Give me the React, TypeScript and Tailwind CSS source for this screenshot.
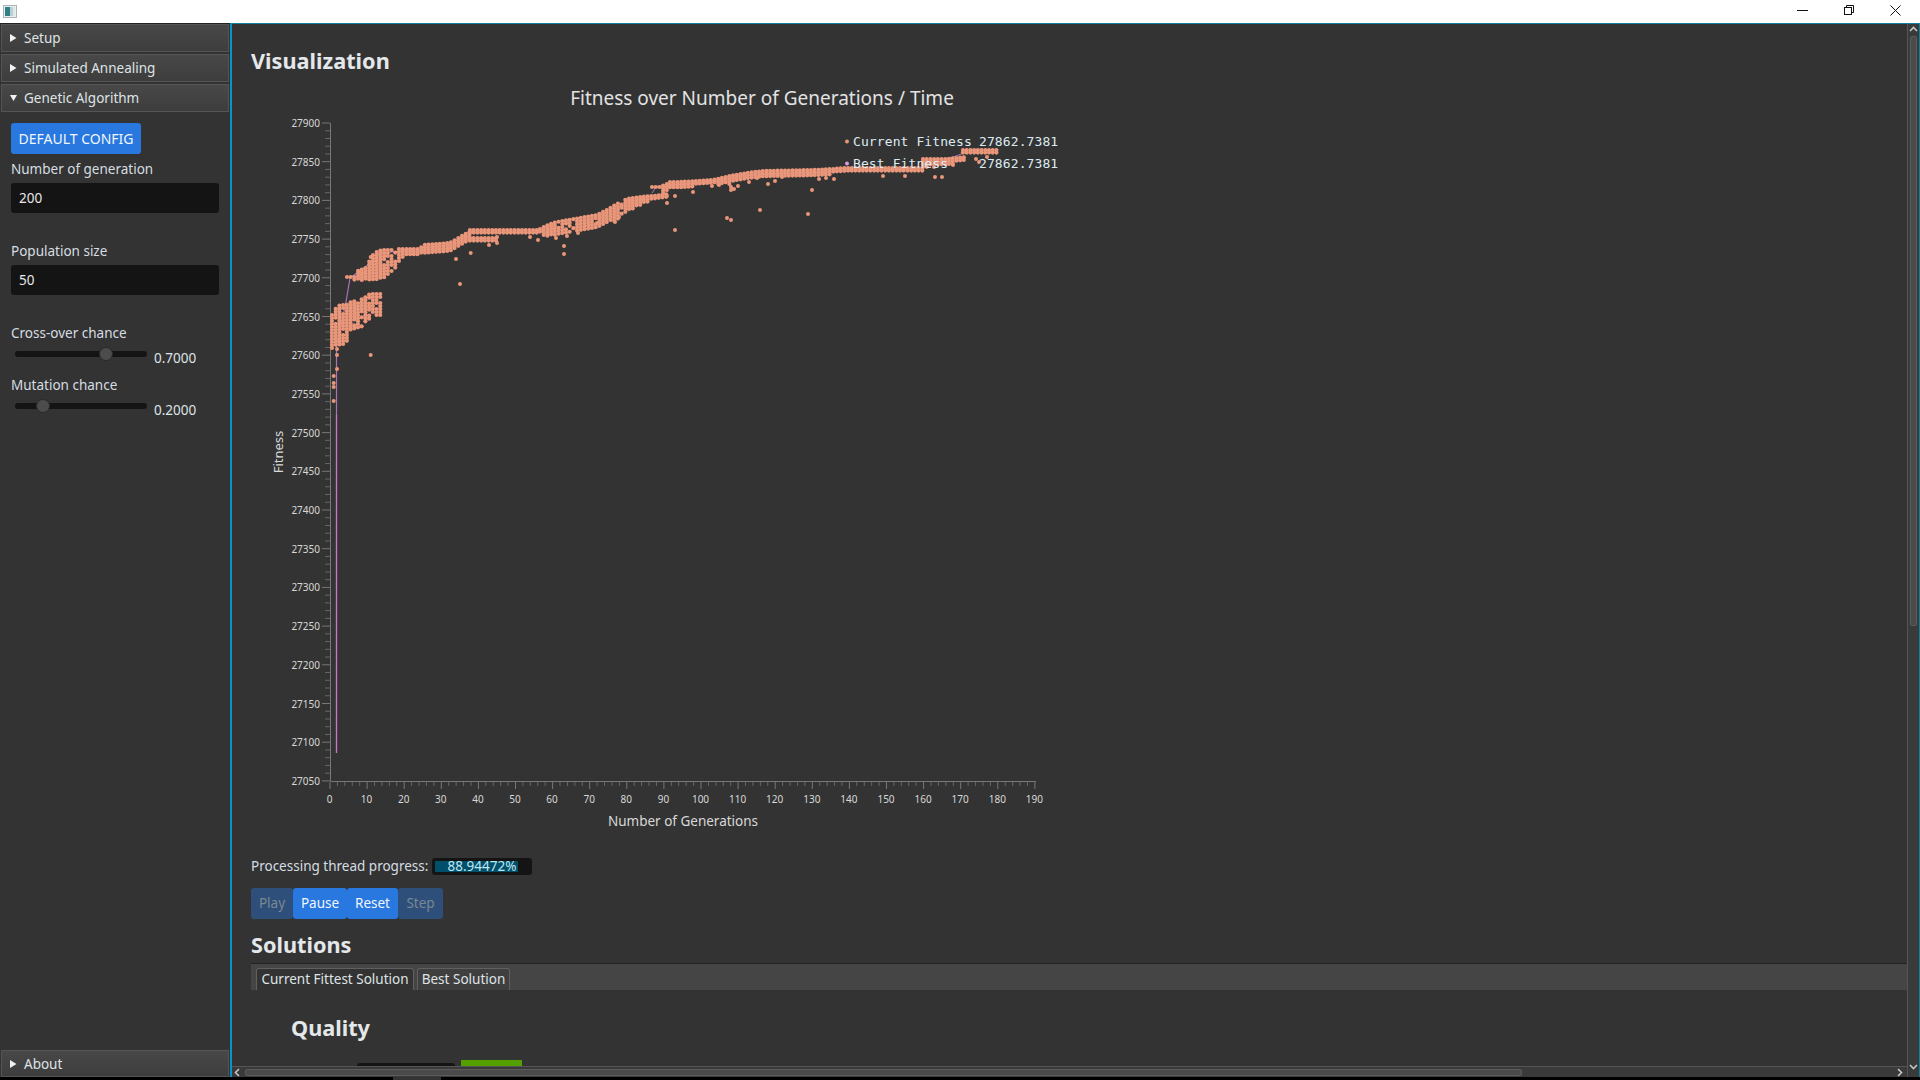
import { ReactNode } from 'react';

const DOT = '#e9967a';
const LINE = '#a874b4';

// envelope points: [x, top, bottom] in page pixels
type Env = [number, number, number][];

const bands: Env[] = [
  [[332, 312, 348], [340, 305, 346], [346.7, 305, 342], [348.3, 303, 330], [363, 299, 327], [370, 294, 318], [380, 294, 317], [383, 294, 310]],
  [[347, 277, 279], [355, 277, 280], [358, 271, 280], [366, 268, 280], [372, 256, 280], [378, 251, 280], [385, 250, 279], [393, 250, 272], [398, 249, 263], [403, 249, 257], [420, 249, 254], [423, 245, 253], [450, 243, 252], [460, 237, 246], [467, 233, 241], [470, 232, 240]],
  [[470, 230, 233], [540, 230, 233]],
  [[470, 238, 242], [497, 238, 242]],
  [[540, 229, 234], [548, 225, 236], [557, 222, 235], [580, 218, 232], [597, 215, 228], [607, 210, 224], [617, 204, 220], [627, 199, 211], [640, 197, 206], [653, 196, 200], [668, 194, 199]],
  [[652, 187, 189], [660, 187, 189], [667, 184, 199], [670, 183, 198]],
  [[670, 182, 189], [680, 182, 188], [713, 180, 184], [730, 176, 184], [747, 173, 179], [763, 171, 178], [813, 170, 176], [833, 169, 174], [847, 168, 172], [923, 168, 172]],
  [[923, 159, 168], [930, 159, 166], [947, 159, 165], [967, 157, 161]],
  [[963, 150, 153], [997, 150, 153]],
];

const outliers: [number, number][] = [
  [370.7, 355], [337, 349], [337, 355], [337, 369], [333.7, 376], [333.7, 383], [333.7, 387], [333.7, 401],
  [370.7, 257], [470.7, 253], [456, 259], [460, 284],
  [489, 245], [497, 243], [497, 237], [530, 237], [538, 240], [556, 238], [567, 236], [564, 246], [564, 254], [578, 233], [597, 223], [615, 222], [619, 217], [667, 203], [675, 196], [675, 230], [693, 192], [712, 186], [719, 185], [731, 187], [731, 190], [734, 189], [738, 186], [749, 182], [768, 184], [757, 178], [727, 218], [731, 220], [760, 210], [808, 214], [812, 190], [819, 179], [826, 178], [834, 179], [782, 177], [775, 181], [883, 176], [905, 176], [935, 177], [942, 177], [976, 159], [979, 162], [987, 157], [953, 165], [934, 167],
];

function makeDots() {
  const dots: [number, number][] = [];
  let seed = 7;
  const rnd = () => {
    seed = (seed * 16807) % 2147483647;
    return seed / 2147483647;
  };
  bands.forEach((env) => {
    const x0 = env[0][0];
    const x1 = env[env.length - 1][0];
    for (let x = x0; x <= x1; x += 3.71) {
      let i = 0;
      while (i < env.length - 2 && env[i + 1][0] < x) i++;
      const a = env[i];
      const b = env[i + 1];
      const t = b[0] === a[0] ? 0 : (x - a[0]) / (b[0] - a[0]);
      const top = a[1] + (b[1] - a[1]) * t;
      const bottom = a[2] + (b[2] - a[2]) * t;
      const tall = bottom - top > 12;
      for (let y = top; y <= bottom + 0.1; y += tall ? 3 : 2.6) {
        if (tall && rnd() < 0.1) continue;
        dots.push([x, y]);
      }
    }
  });
  return dots;
}

const dots = makeDots();
const yLabels = Array.from({ length: 18 }, (_, i) => 27900 - i * 50);
const xLabels = Array.from({ length: 20 }, (_, i) => i * 10);
const yAt = (i: number) => 123 + i * 38.7;
const xAt = (i: number) => 330 + i * 37.1;

function Chart() {
  return (
    <svg width={870} height={764} viewBox="232 80 870 764" className="mt-[3px] block shrink-0">
      <text x={762} y={105} textAnchor="middle" fontSize={19} fill="#e2e2e2" fontFamily="Noto Sans, sans-serif">
        Fitness over Number of Generations / Time
      </text>

      {/* axes */}
      <line x1={330.5} y1={123} x2={330.5} y2={781} stroke="#777" />
      <line x1={330.5} y1={781.5} x2={1036} y2={781.5} stroke="#777" />
      {yLabels.map((v, i) => (
        <g key={v}>
          <line x1={322} x2={330} y1={yAt(i)} y2={yAt(i)} stroke="#777" />
          {i < 17 &&
            [1, 2, 3, 4].map((m) => (
              <line key={m} x1={325} x2={330} y1={yAt(i) + m * 7.74} y2={yAt(i) + m * 7.74} stroke="#666" />
            ))}
          <text x={320} y={yAt(i) + 4} textAnchor="end" fontSize={10} fill="#d8d8d8" fontFamily="Noto Sans, sans-serif">
            {v}
          </text>
        </g>
      ))}
      {xLabels.map((v, i) => (
        <g key={v}>
          <line x1={xAt(i)} x2={xAt(i)} y1={782} y2={789} stroke="#777" />
          {i < 19 &&
            [1, 2, 3, 4].map((m) => (
              <line key={m} x1={xAt(i) + m * 7.42} x2={xAt(i) + m * 7.42} y1={782} y2={786} stroke="#666" />
            ))}
          <text x={xAt(i) - 0.5} y={803} textAnchor="middle" fontSize={10} fill="#d8d8d8" fontFamily="Noto Sans, sans-serif">
            {v}
          </text>
        </g>
      ))}
      <text x={683} y={826} textAnchor="middle" fontSize={13.5} fill="#d8d8d8" fontFamily="Noto Sans, sans-serif">
        Number of Generations
      </text>
      <text
        transform="translate(283 452) rotate(-90)"
        textAnchor="middle"
        fontSize={13}
        fill="#d8d8d8"
        fontFamily="Noto Sans, sans-serif"
      >
        Fitness
      </text>

      {/* best fitness line */}
      <polyline points="336.5,753 336.5,345 340,330 346,302 350,278 358,272 372,262 378,254 412,249" fill="none" stroke={LINE} strokeWidth={1.2} />
      <line x1={336.5} x2={336.5} y1={415} y2={753} stroke="#cf73cf" strokeWidth={1.2} />
      <polyline points="652,193 656,187 712,181 732,176 923,168 964,153 967,150" fill="none" stroke={LINE} strokeWidth={1} />

      {/* current fitness dots */}
      {dots.map(([x, y], i) => (
        <circle key={i} cx={x} cy={y} r={2.1} fill={DOT} />
      ))}
      {outliers.map(([x, y], i) => (
        <circle key={i} cx={x} cy={y} r={2} fill={DOT} />
      ))}

      {/* legend */}
      <circle cx={847} cy={141.5} r={2} fill={DOT} />
      <circle cx={847} cy={163.5} r={2} fill="#d99bdc" />
      <text x={853} y={146} fontSize={13} fill="#dcebf2" fontFamily="DejaVu Sans Mono, monospace" letterSpacing={0.1}>
        Current Fitness
      </text>
      <text x={979} y={146} fontSize={13} fill="#dcebf2" fontFamily="DejaVu Sans Mono, monospace" letterSpacing={0.1}>
        27862.7381
      </text>
      <text x={853} y={168} fontSize={13} fill="#dcebf2" fontFamily="DejaVu Sans Mono, monospace" letterSpacing={0.1}>
        Best Fitness
      </text>
      <text x={979} y={168} fontSize={13} fill="#dcebf2" fontFamily="DejaVu Sans Mono, monospace" letterSpacing={0.1}>
        27862.7381
      </text>
    </svg>
  );
}

function Arrow({ open }: { open?: boolean }) {
  return (
    <svg width={7} height={8} viewBox="0 0 7 8" className="shrink-0">
      <path d={open ? 'M0 1 L7 1 L3.5 7 Z' : 'M0 0 L6.5 4 L0 8 Z'} fill="#f2f2f2" />
    </svg>
  );
}

function PaneTitle({ label, open, last }: { label: string; open?: boolean; last?: boolean }) {
  return (
    <div
      className={`mx-px flex shrink-0 items-center gap-[7px] border border-[#555] bg-gradient-to-b from-[#484848] to-[#3d3d3d] pl-[8px] text-[13.5px] text-[#dfe3e6] ${
        last ? 'h-[27px] pt-px' : 'h-[28px]'
      }`}
    >
      <Arrow open={open} />
      <span>{label}</span>
    </div>
  );
}

function Field({ value }: { value: string }) {
  return (
    <div className="mx-[11px] flex h-[30px] items-center rounded-[3px] bg-[#141414] pl-[8px] text-[13.5px] text-[#e8e8e8]">
      {value}
    </div>
  );
}

function Slider({ thumb, value }: { thumb: number; value: string }) {
  return (
    <div className="flex h-[24px] items-start pl-[15px]">
      <div className="relative mt-[8px] h-[6px] w-[132px] rounded-full bg-[#141414]">
        <div
          className="absolute top-[-4px] h-[14px] w-[14px] rounded-full border border-[#2a2a2a] bg-[#4c4c4c]"
          style={{ left: thumb }}
        />
      </div>
      <span className="ml-[7px] mt-[5px] text-[13.5px] leading-[20px] text-[#dfe3e6]">{value}</span>
    </div>
  );
}

function Label({ children, className }: { children: ReactNode; className?: string }) {
  return <div className={`ml-[11px] h-[20px] text-[13.5px] leading-[20px] text-[#d6dde2] ${className}`}>{children}</div>;
}

function Sidebar() {
  return (
    <aside className="flex w-[230px] shrink-0 flex-col gap-[2px] border-t border-[#222] bg-[#333] pb-0">
      <PaneTitle label="Setup" />
      <PaneTitle label="Simulated Annealing" />
      <PaneTitle label="Genetic Algorithm" open />
      <div className="flex flex-1 flex-col">
        <button className="ml-[11px] mt-[9px] flex h-[31px] w-[130px] items-center justify-center rounded-[3px] bg-[#2878e0] text-[14px] text-[#f0f6fc]">
          DEFAULT CONFIG
        </button>
        <Label className="mt-[5px] mb-[4px]">Number of generation</Label>
        <Field value="200" />
        <Label className="mt-[28px] mb-[4px]">Population size</Label>
        <Field value="50" />
        <Label className="mt-[28px]">Cross-over chance</Label>
        <Slider thumb={84} value="0.7000" />
        <Label className="mt-[8px]">Mutation chance</Label>
        <Slider thumb={21} value="0.2000" />
      </div>
      <PaneTitle label="About" last />
    </aside>
  );
}

function Heading({ children, className }: { children: ReactNode; className?: string }) {
  return <h2 className={`flex h-[32px] items-center text-[21.7px] font-bold text-[#e4e8ea] ${className}`}>{children}</h2>;
}

function TitleBar() {
  return (
    <header className="flex h-[23px] shrink-0 items-center bg-white">
      <svg width={14} height={13} viewBox="0 0 14 13" className="ml-[3px]">
        <rect x={0.5} y={0.5} width={13} height={12} fill="#e8eef0" stroke="#aab4b8" />
        <rect x={2} y={2} width={5} height={9} fill="#2f7f86" />
        <rect x={7} y={2} width={3} height={9} fill="#b8d0d0" />
        <rect x={10} y={2} width={2} height={9} fill="#dfe8e8" />
      </svg>
      <div className="mb-[3px] ml-auto flex items-center">
        <svg width={11} height={1} className="mr-[36px]">
          <rect width={11} height={1} fill="#111" />
        </svg>
        <svg width={10} height={10} viewBox="0 0 10 10" className="mr-[36px]" fill="none" stroke="#111">
          <rect x={0.5} y={2.5} width={7} height={7} />
          <path d="M2.5 2.5 V0.5 H9.5 V7.5 H7.5" />
        </svg>
        <svg width={11} height={11} viewBox="0 0 11 11" className="mr-[19px]" stroke="#111">
          <path d="M0.5 0.5 L10.5 10.5 M10.5 0.5 L0.5 10.5" />
        </svg>
      </div>
    </header>
  );
}

function PlayButton({ label, active, w }: { label: string; active?: boolean; w: string }) {
  return (
    <button
      className={`flex h-[31px] items-center justify-center rounded-[3px] text-[13.5px] ${w} ${
        active ? 'bg-[#2878e0] text-[#f0f6fc]' : 'bg-[#2d4f7a] text-[#7b8794]'
      }`}
    >
      {label}
    </button>
  );
}

function Chevron({ d, className }: { d: string; className?: string }) {
  return (
    <svg width={9} height={9} viewBox="0 0 9 9" fill="none" stroke="#c4c4c4" strokeWidth={1.6} className={className}>
      <path d={d} />
    </svg>
  );
}

export default function App() {
  return (
    <div
      className="flex h-[1080px] w-[1920px] flex-col overflow-hidden bg-black"
      style={{ fontFamily: '"Noto Sans", sans-serif' }}
    >
      <TitleBar />
      <div className="flex min-h-0 flex-1">
        <Sidebar />
        <main className="flex min-w-0 flex-1 border-l-2 border-r border-t border-[#0a93c8] border-r-[#0f7f9f] border-t-[#0f7f9f] bg-[#333]">
          <div className="flex min-w-0 flex-1 flex-col">
            <div className="min-h-0 flex-1 overflow-hidden">
              <Heading className="ml-[19px] mt-[21px]">Visualization</Heading>
              <Chart />
              <div className="ml-[19px] mt-[14px] flex h-[17px] items-center gap-[5px] text-[13.5px] text-[#d6dde2]">
                <span className="w-[176px] whitespace-nowrap">Processing thread progress:</span>
                <div className="relative h-[17px] w-[100px] rounded-[3px] bg-[#141414] p-[3px]">
                  <div className="h-[11px] w-[83px] bg-[#004f6b]" />
                  <span className="absolute inset-0 flex items-center justify-center text-[13.5px] text-[#bfe6f0]">
                    88.94472%
                  </span>
                </div>
              </div>
              <div className="ml-[19px] mt-[13px] flex">
                <PlayButton label="Play" w="w-[42px]" />
                <PlayButton label="Pause" active w="w-[54px]" />
                <PlayButton label="Reset" active w="w-[51px]" />
                <PlayButton label="Step" w="w-[45px]" />
              </div>
              <Heading className="ml-[19px] mt-[10px]">Solutions</Heading>
              <div className="ml-[19px] mt-[2px] flex h-[27px] items-end gap-[3px] border-t border-[#222] bg-[#454545] pl-[5px]">
                <div className="flex h-[22px] w-[158px] items-center justify-center rounded-t-[3px] border border-b-0 border-[#606060] bg-[#333] text-[13.5px] text-[#dfe3e6]">
                  Current Fittest Solution
                </div>
                <div className="flex h-[22px] w-[93px] items-center justify-center rounded-t-[3px] border border-b-0 border-[#606060] bg-[#3f3f3f] text-[13.5px] text-[#dfe3e6]">
                  Best Solution
                </div>
              </div>
              <Heading className="ml-[59px] mt-[22px]">Quality</Heading>
              <div className="ml-[125px] mt-[16px] flex items-start gap-[6px]">
                <div className="mt-[3px] h-[17px] w-[98px] rounded-[3px] bg-[#141414] p-[3px]">
                  <div className="h-[11px] w-full bg-[#004f6b]" />
                </div>
                <div className="h-[20px] w-[61px] bg-[#53a000]" />
              </div>
            </div>
            <div className="flex h-[11px] shrink-0 items-center border-t border-[#555] bg-[#3a3a3a]">
              <Chevron d="M6 1 L2.5 4.5 L6 8" className="ml-[1px] shrink-0" />
              <div className="ml-[3px] h-[7px] w-[1277px] rounded-[2px] border border-[#5c5c5c] bg-[#4a4a4a]" />
              <Chevron d="M3 1 L6.5 4.5 L3 8" className="ml-auto mr-[3px] shrink-0" />
            </div>
          </div>
          <div className="flex w-[12px] shrink-0 flex-col items-center border-l border-[#555] bg-[#3a3a3a]">
            <Chevron d="M1 6 L4.5 2.5 L8 6" className="mt-[1px] shrink-0" />
            <div className="mt-[2px] h-[590px] w-[7px] rounded-[2px] border border-[#5c5c5c] bg-[#4a4a4a]" />
            <Chevron d="M1 3 L4.5 6.5 L8 3" className="mt-auto mb-[6px] shrink-0" />
          </div>
        </main>
      </div>
      <div className="flex h-[3px] shrink-0 pl-[393px]">
        <div className="h-[3px] w-[48px] bg-[#333]" />
      </div>
    </div>
  );
}
